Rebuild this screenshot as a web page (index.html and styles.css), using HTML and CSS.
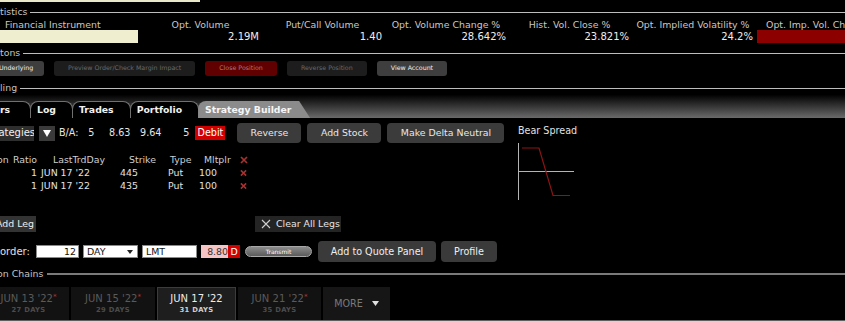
FILE: index.html
```html
<!DOCTYPE html>
<html>
<head>
<meta charset="utf-8">
<link rel="stylesheet" href="styles.css">
</head>
<body>
<div class="topstrip"><div class="topfield"></div></div>

<div class="sec"><span>tistics</span></div>
<div class="stats">
  <div class="sh sh-first">Financial Instrument</div>
  <div class="sh">Opt. Volume</div>
  <div class="sh">Put/Call Volume</div>
  <div class="sh">Opt. Volume Change %</div>
  <div class="sh">Hist. Vol. Close %</div>
  <div class="sh">Opt. Implied Volatility %</div>
  <div class="sh sh-last">Opt. Imp. Vol. Change %</div>
  <div class="sv"><div class="instr"></div></div>
  <div class="sv">2.19M</div>
  <div class="sv">1.40</div>
  <div class="sv">28.642%</div>
  <div class="sv">23.821%</div>
  <div class="sv">24.2%</div>
  <div class="sv"><div class="redbar"></div></div>
</div>

<div class="sec sec-actions"><span>tons</span></div>
<div class="actions">
  <div class="abtn abtn-on abtn-first"><span class="cut">Underlying</span></div>
  <div class="abtn abtn-off">Preview Order/Check Margin Impact</div>
  <div class="abtn abtn-danger">Close Position</div>
  <div class="abtn abtn-off">Reverse Position</div>
  <div class="abtn abtn-on">View Account</div>
</div>

<div class="sec sec-trading"><span>ling</span></div>
<div class="tabbar">
  <div class="tab tab-first">rs</div>
  <div class="tab">Log</div>
  <div class="tab">Trades</div>
  <div class="tab">Portfolio</div>
  <div class="tab tab-active">Strategy Builder</div>
</div>

<div class="strat">
  <div class="strat-left">
    <div class="ctrl">
      <div class="sel"><span class="cut cut-sel">Strategies</span></div>
      <div class="drop"><svg width="8" height="7" viewBox="0 0 8 7"><polygon points="0,0 8,0 4,7" fill="#fff"/></svg></div>
      <span class="ba">B/A:</span>
      <span class="q q1">5</span>
      <span class="q q2">8.63</span>
      <span class="q q3">9.64</span>
      <span class="q q4">5</span>
      <div class="debit">Debit</div>
      <div class="sbtn sbtn-rev">Reverse</div>
      <div class="sbtn sbtn-stock">Add Stock</div>
      <div class="sbtn sbtn-delta">Make Delta Neutral</div>
    </div>

    <div class="legs">
      <div class="lhead">
        <span class="lh-on">on</span><span>Ratio</span><span>LastTrdDay</span><span>Strike</span><span>Type</span><span>Mltplr</span>
        <span class="xc"><svg width="8" height="8" viewBox="0 0 8 8"><path d="M1 1 L7 7 M7 1 L1 7" stroke="#a83232" stroke-width="1.7"/></svg></span>
      </div>
      <div class="lrow">
        <span class="ratio">1</span><span>JUN 17 '22</span><span>445</span><span>Put</span><span>100</span>
        <span class="xc"><svg width="8" height="8" viewBox="0 0 8 8"><path d="M1 1 L7 7 M7 1 L1 7" stroke="#a83232" stroke-width="1.7"/></svg></span>
      </div>
      <div class="lrow">
        <span class="ratio">1</span><span>JUN 17 '22</span><span>435</span><span>Put</span><span>100</span>
        <span class="xc"><svg width="8" height="8" viewBox="0 0 8 8"><path d="M1 1 L7 7 M7 1 L1 7" stroke="#a83232" stroke-width="1.7"/></svg></span>
      </div>
    </div>

    <div class="legbar">
      <div class="addleg"><span class="cut cut-leg">Add Leg</span></div>
      <div class="clear">
        <svg width="10" height="10" viewBox="0 0 10 10"><path d="M1 1 L9 9 M9 1 L1 9" stroke="#cfcfcf" stroke-width="1.1"/></svg>
        <span>Clear All Legs</span>
      </div>
    </div>

    <div class="order">
      <span class="olabel">order:</span>
      <div class="inp inp-qty">12</div>
      <div class="inp inp-tif"><span>DAY</span><svg width="6" height="4" viewBox="0 0 6 4"><polygon points="0,0 6,0 3,4" fill="#222"/></svg></div>
      <div class="inp inp-type">LMT</div>
      <div class="price">8.80</div>
      <div class="pd">D</div>
      <div class="transmit">Transmit</div>
      <div class="obtn obtn-quote">Add to Quote Panel</div>
      <div class="obtn obtn-profile">Profile</div>
    </div>
  </div>

  <div class="strat-right">
    <div class="chart-title">Bear Spread</div>
    <svg class="chart" width="60" height="58" viewBox="0 0 60 58">
      <path d="M0.5 0 L0.5 57" stroke="#b4b4b4" stroke-width="1"/>
      <path d="M0 28.5 L56 28.5" stroke="#b4b4b4" stroke-width="1"/>
      <path d="M4 5 L21 5 L35 52.5 L52 52.5" stroke="#8e1414" stroke-width="1.2" fill="none"/>
    </svg>
  </div>
</div>

<div class="sec sec-chains"><span class="cut cut-chains">on Chains</span></div>
<div class="dates">
  <div class="dt dt-first"><div class="dt-date">JUN 13 '22<span class="star">*</span></div><div class="dt-days">27 DAYS</div></div>
  <div class="dt dt-w84"><div class="dt-date">JUN 15 '22<span class="star">*</span></div><div class="dt-days">29 DAYS</div></div>
  <div class="dt dt-active"><div class="dt-date">JUN 17 '22</div><div class="dt-days">31 DAYS</div></div>
  <div class="dt dt-w83"><div class="dt-date">JUN 21 '22<span class="star">*</span></div><div class="dt-days">35 DAYS</div></div>
  <div class="dt dt-more"><span class="more">MORE</span><svg width="7" height="5" viewBox="0 0 7 5"><polygon points="0,0 7,0 3.5,5" fill="#e0e0e0"/></svg></div>
</div>
</body>
</html>
```
FILE: styles.css
```css
* { box-sizing: border-box; margin: 0; padding: 0; }
html, body { background: #000; }
body {
  width: 845px;
  height: 321px;
  overflow: hidden;
  font-family: "DejaVu Sans", "Noto Sans", sans-serif;
  font-size: 9.4px;
  line-height: 1;
  color: #d6d6d6;
}

.cut { display: block; white-space: nowrap; }

.topstrip { height: 5px; }
.topfield { width: 200px; height: 2px; background: #e9e9c9; }

.sec {
  display: flex;
  align-items: center;
  height: 14px;
  color: #c4c4c4;
  white-space: nowrap;
}
.sec::after {
  content: "";
  flex: 1;
  height: 1px;
  background: #bdbdbd;
  margin-left: 3px;
}
.sec-actions { margin-top: 3px; }
.sec-trading { margin-top: 5px; }
.sec-chains { margin-top: 5px; }
.sec-chains::after { height: 2px; background: #7a7a7a; margin-left: 4px; }
.cut-chains { margin-left: -3px; }

/* statistics */
.stats {
  display: grid;
  grid-template-columns: 140px 121px 123px 124px 123px 124px 1fr;
  grid-template-rows: 11px 13px;
}
.sh { text-align: center; white-space: nowrap; overflow: hidden; color: #c8c8c8; line-height: 11px; }
.sh-first { text-align: left; padding-left: 5px; }
.sh-last { text-align: left; padding-left: 11px; }
.sv { text-align: right; padding-right: 2px; color: #eeeeee; line-height: 13px; font-size: 10px; }
.instr { width: 138px; height: 13px; background: #efefcf; }
.redbar { margin-left: 2px; height: 13px; background: #8c0000; margin-right: -2px; }

/* action buttons */
.actions { display: flex; gap: 10px; height: 16px; align-items: center; }
.abtn {
  height: 15px;
  padding: 0 14px;
  border-radius: 3px;
  font-size: 6.3px;
  display: flex;
  align-items: center;
  white-space: nowrap;
}
.abtn-on { background: #3e3e3e; color: #f0f0f0; }
.abtn-off { background: #1d1d1d; color: #6a6a6a; }
.abtn-danger { background: #600000; color: #b47878; }
.abtn-first { width: 44px; padding: 0; overflow: hidden; border-radius: 0 3px 3px 0; }
.abtn-first .cut { margin-left: -1px; }

/* tab bar */
.tabbar {
  height: 23px;
  background: linear-gradient(#020202, #6a6a6a);
  display: flex;
  align-items: flex-end;
}
.tab {
  height: 17px;
  padding: 0 16px 0 6px;
  display: flex;
  align-items: center;
  font-weight: bold;
  font-size: 9.3px;
  color: #f2f2f2;
  background: #000;
  border: 1px solid #707070;
  border-bottom: 0;
  border-radius: 8px 8px 0 0;
  margin-left: -1px;
  white-space: nowrap;
}
.tab-first { width: 31px; padding: 0; border-left: 0; border-top-left-radius: 0; margin-left: 0; }
.tab-active {
  width: 112px;
  background: #8b8b8b;
  color: #f6f6f6;
  border: 0;
  border-radius: 8px 0 0 0;
  padding-left: 7px;
  clip-path: polygon(0 0, calc(100% - 11px) 0, 100% 100%, 0 100%);
}

/* strategy builder */
.strat { display: flex; }
.strat-left { width: 518px; }
.strat-right { display: flex; flex-direction: column; }
.chart-title { margin-top: 7px; height: 12px; line-height: 12px; font-size: 9.6px; color: #e0e0e0; white-space: nowrap; }
.chart { display: block; margin-top: 6px; }

.ctrl {
  display: flex;
  align-items: center;
  height: 20px;
  margin-top: 5px;
  font-size: 9.6px;
  white-space: nowrap;
  color: #e6e6e6;
}
.sel { width: 34px; height: 15px; background: #2e2e2e; color: #f0f0f0; display: flex; align-items: center; overflow: hidden; font-size: 10px; }
.cut-sel { margin-left: -16px; }
.drop { width: 16px; height: 15px; margin-left: 5px; background: #3a3a3a; display: flex; align-items: center; justify-content: center; }
.ba { margin-left: 4px; }
.q { display: inline-block; text-align: right; }
.q1 { width: 16px; }
.q2 { width: 36px; }
.q3 { width: 31px; }
.q4 { width: 28px; }
.debit { margin-left: 6px; width: 30px; height: 14px; background: #d10000; color: #fff; display: flex; align-items: center; justify-content: center; font-size: 9.6px; }
.sbtn {
  height: 20px;
  border-radius: 4px;
  background: #3b3b3b;
  color: #e8e8e8;
  display: flex;
  align-items: center;
  justify-content: center;
  font-size: 9.4px;
}
.sbtn-rev { margin-left: 12px; width: 64px; }
.sbtn-stock { margin-left: 6px; width: 74px; }
.sbtn-delta { margin-left: 6px; width: 117px; }

.legs { margin-top: 11px; white-space: nowrap; }
.lhead {
  display: grid;
  grid-template-columns: 13px 40px 76px 41px 34px 36px 10px;
  height: 12px;
  align-items: center;
  color: #cfcfcf;
  overflow: hidden;
}
.lh-on { margin-left: -3px; }
.lrow {
  display: grid;
  grid-template-columns: 38px 79px 48px 31px 41px 10px;
  height: 13px;
  align-items: center;
  color: #e2e2e2;
}
.lrow span { padding-left: 3px; }
.lrow .ratio { padding-left: 0; padding-right: 1px; text-align: right; }
.lhead .xc, .lrow .xc { display: flex; align-items: center; }
.lrow .xc { padding-left: 3px; }

.legbar { display: flex; align-items: center; height: 16px; margin-top: 24px; white-space: nowrap; }
.addleg { width: 36px; height: 16px; background: #333; display: flex; align-items: center; color: #eee; overflow: hidden; }
.cut-leg { margin-left: -4px; }
.clear {
  margin-left: 219px;
  width: 86px;
  height: 16px;
  background: #242424;
  display: flex;
  align-items: center;
  gap: 5px;
  padding-left: 6px;
  color: #e4e4e4;
}

.order { display: flex; align-items: center; height: 21px; margin-top: 9px; white-space: nowrap; }
.olabel { width: 36px; font-size: 10px; color: #e0e0e0; }
.inp {
  height: 13px;
  background: #fff;
  color: #111;
  border: 1px solid #8a8a8a;
  display: flex;
  align-items: center;
  padding: 0 3px;
  font-size: 9.4px;
}
.inp-qty { width: 43px; justify-content: flex-end; padding-right: 2px; }
.inp-tif { width: 55px; margin-left: 4px; justify-content: space-between; padding-right: 4px; }
.inp-type { width: 55px; margin-left: 4px; }
.price { margin-left: 4px; width: 27px; height: 13px; background: #f6c4c4; color: #333; display: flex; align-items: center; justify-content: flex-end; font-size: 9.4px; }
.pd { width: 12px; height: 13px; background: #d40000; color: #fff; display: flex; align-items: center; justify-content: center; font-size: 9.4px; }
.transmit {
  margin-left: 5px;
  width: 67px;
  height: 11px;
  border-radius: 6px;
  background: linear-gradient(#8c8c8c, #5a5a5a);
  border: 1px solid #a8a8a8;
  color: #fff;
  font-size: 6px;
  display: flex;
  align-items: center;
  justify-content: center;
}
.obtn {
  height: 21px;
  border-radius: 4px;
  background: #3a3a3a;
  color: #eeeeee;
  font-size: 9.6px;
  display: flex;
  align-items: center;
  justify-content: center;
}
.obtn-quote { margin-left: 6px; width: 118px; }
.obtn-profile { margin-left: 5px; width: 56px; }

/* expiry tabs */
.dates {
  display: flex;
  gap: 2px;
  height: 34px;
  margin-top: 6px;
  border-bottom: 1px solid #5e5e5e;
  white-space: nowrap;
}
.dt {
  background: #121212;
  display: flex;
  flex-direction: column;
  align-items: center;
  justify-content: center;
  gap: 3px;
}
.dt-first { width: 81px; margin-left: -12px; }
.dt-w84 { width: 84px; }
.dt-w83 { width: 83px; }
.dt-active { width: 79px; background: #1e1e1e; border: 1px solid #3c3c3c; border-bottom: 0; }
.dt-more { width: 67px; flex-direction: row; gap: 9px; background: #161616; }
.dt-date { font-size: 10px; color: #5a5a5a; }
.dt-days { font-size: 6.8px; font-weight: bold; color: #4c4c4c; letter-spacing: 0.3px; }
.dt-active .dt-date { color: #ececec; }
.dt-active .dt-days { color: #cfcfcf; }
.star { color: #c23030; font-size: 7px; vertical-align: top; }
.more { font-size: 9.6px; color: #7a7a7a; }
```
